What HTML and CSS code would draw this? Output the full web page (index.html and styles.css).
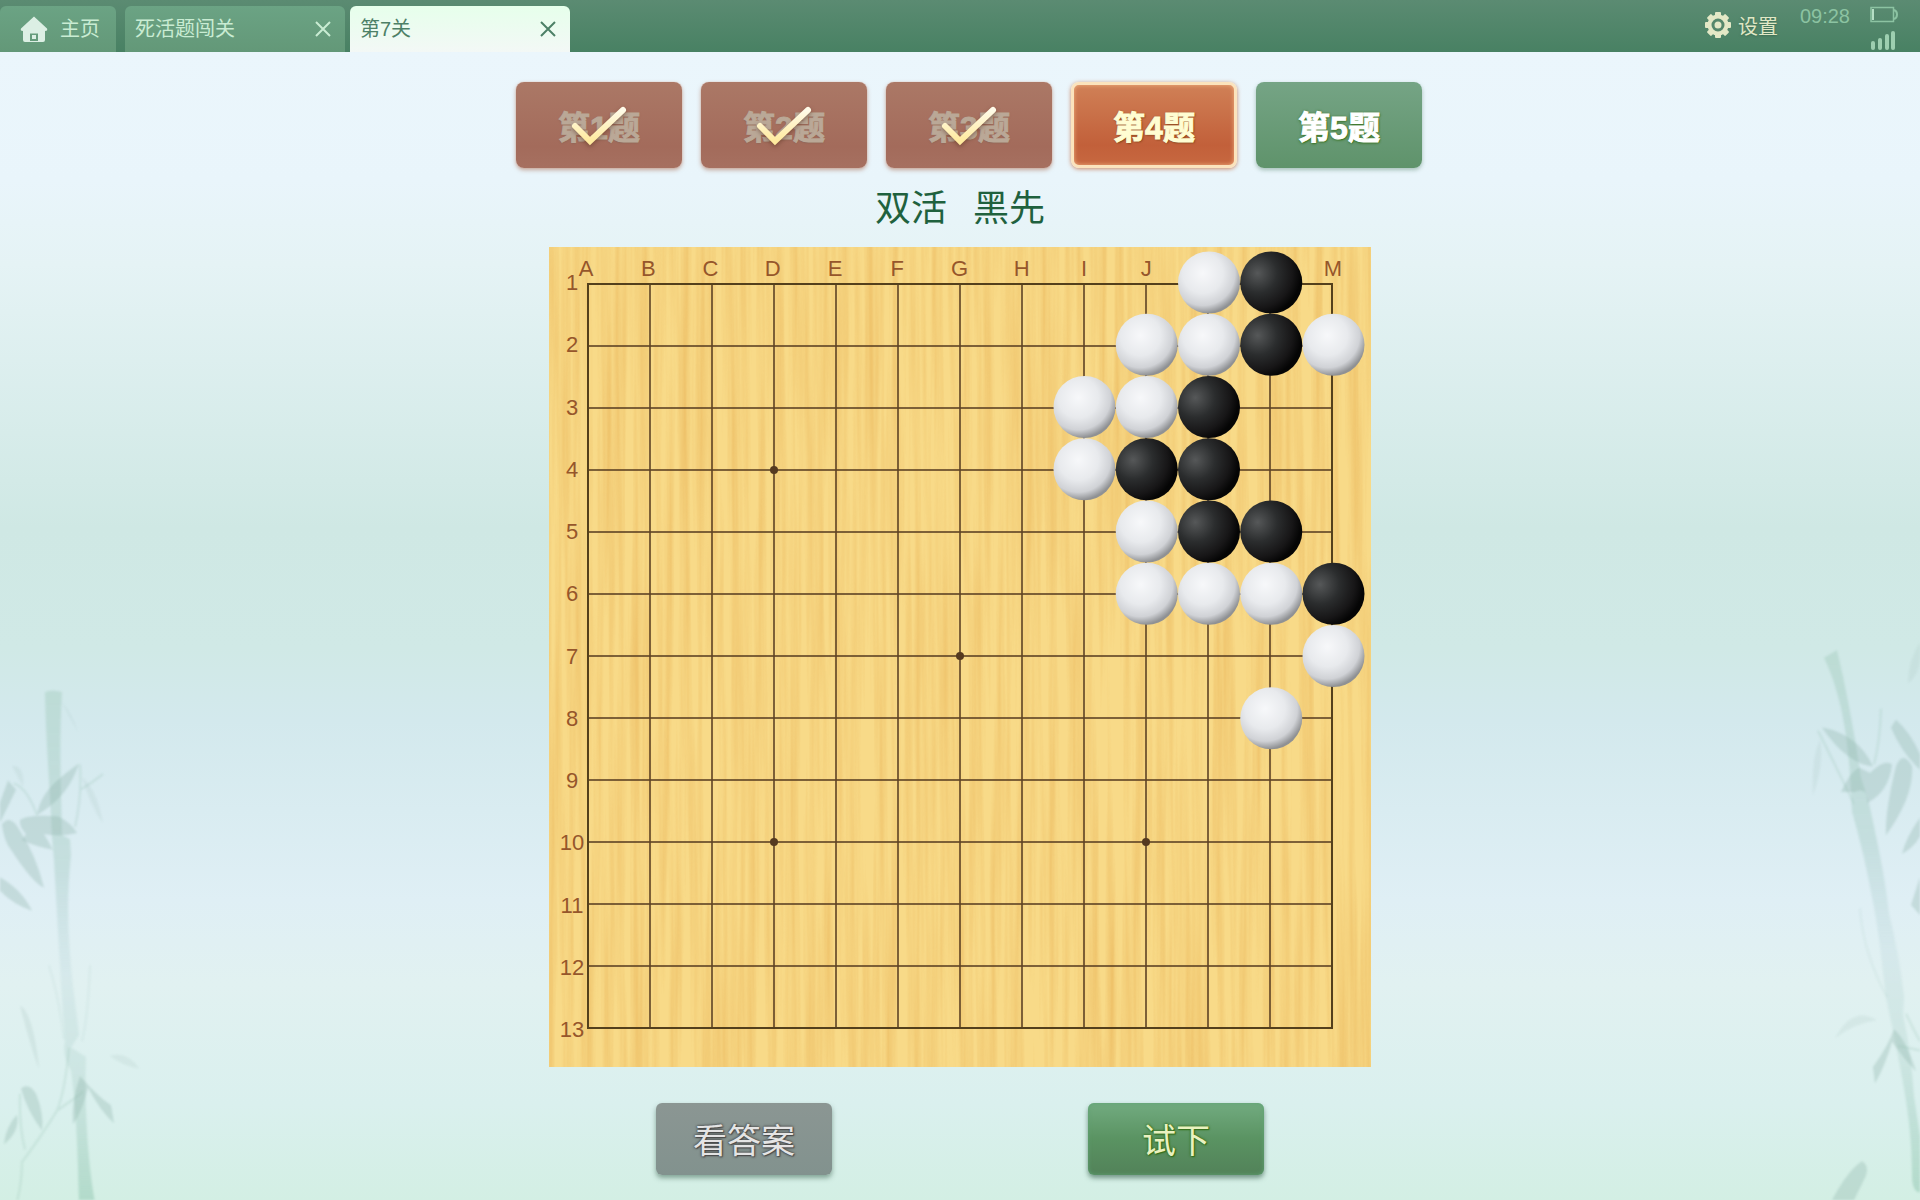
FILE: index.html
```html
<!doctype html>
<html lang="zh-CN">
<head>
    <meta charset="UTF-8">
    <meta name="viewport" content="width=device-width, initial-scale=1.0">
    <title>第7关</title>
    <link rel="stylesheet" href="styles.css">
</head>
<body>
    <header class="topbar">
        <nav class="tabs">
            <a class="tab tab-home" href="#">
                <svg class="icon-home" viewBox="0 0 28 28" aria-hidden="true">
                    <path d="M14 1.5 27 13.5Q28 16 25 16V25Q25 27 23 27H5Q3 27 3 25V16Q0 16 1 13.5ZM10 18.500V26H18V18.500Z" fill="#dcefe4" fill-rule="evenodd"/>
                    <rect x="12" y="20" width="4" height="4" fill="#dcefe4"/>
                </svg>
                <span>主页</span>
            </a>
            <div class="tab">
                <a href="#">死活题闯关</a>
                <button class="tab-close" type="button" aria-label="关闭">
                    <svg viewBox="0 0 16 16"><path d="M1 1 15 15M15 1 1 15"/></svg>
                </button>
            </div>
            <div class="tab active">
                <a href="#">第7关</a>
                <button class="tab-close" type="button" aria-label="关闭">
                    <svg viewBox="0 0 16 16"><path d="M1 1 15 15M15 1 1 15"/></svg>
                </button>
            </div>
        </nav>
        <div class="status">
            <button class="settings" type="button">
                <svg class="icon-gear" viewBox="-14 -14 28 28" aria-hidden="true">
                    <g fill="#e3e8c6">
                        <rect id="tooth" x="-3" y="-13" width="6" height="26" rx="1"/>
                        <use href="#tooth" transform="rotate(45)"/>
                        <use href="#tooth" transform="rotate(90)"/>
                        <use href="#tooth" transform="rotate(135)"/>
                        <circle r="10.500"/>
                    </g>
                    <circle r="5" fill="#e3e8c6" stroke="#55876b" stroke-width="3"/>
                </svg>
                <span>设置</span>
            </button>
            <time class="clock">09:28</time>
            <div class="device">
                <svg viewBox="0 0 28 17" width="28" height="17" aria-hidden="true">
                    <path d="M1 1.500H23.500V15.500H1Z" fill="none" stroke="#8cc3a2" stroke-width="1.500"/>
                    <path d="M24 4Q27 5 27 8.500T24 13" fill="none" stroke="#8cc3a2" stroke-width="2"/>
                    <rect x="2" y="3" width="2" height="11" fill="#b5dfc5"/>
                </svg>
                <svg viewBox="0 0 26 19" width="26" height="19" aria-hidden="true">
                    <g fill="#9dcfb0">
                        <rect x="1" y="10" width="4" height="9" rx="2"/>
                        <rect x="8" y="7" width="4" height="12" rx="2"/>
                        <rect x="15" y="3" width="4" height="16" rx="2"/>
                        <rect x="21" y="0" width="4" height="19" rx="2"/>
                    </g>
                </svg>
            </div>
        </div>
    </header>

    <svg class="bamboo bamboo-left" viewBox="0 0 150 523" preserveAspectRatio="none" aria-hidden="true">
        <defs>
            <linearGradient id="stalk" x1="0" y1="0" x2="0" y2="1">
                <stop offset="0" stop-color="#a9cfc2" stop-opacity=".5"/>
                <stop offset=".35" stop-color="#a9cdc6" stop-opacity=".45"/>
                <stop offset=".55" stop-color="#bcd7dc" stop-opacity=".3"/>
                <stop offset=".75" stop-color="#a9cdc4" stop-opacity=".3"/>
                <stop offset="1" stop-color="#9ccdb9" stop-opacity=".6"/>
            </linearGradient>
        </defs>
        <path d="M45 40Q52 37 62 40C59 90 61 130 62 176L70 180 71 195C66 240 68 275 73 320L79 366 71 378 86 387C84 430 88 490 95 525H79C78 480 76 430 71 400Q62 385 65 372C61 320 57 250 54 200L52 178C50 130 46 90 45 40Z" fill="url(#stalk)"/>
        <g fill="#8db0a8" fill-opacity=".32">
            <path d="M37 157C41 136 54 125 79 108C70 133 56 146 37 157Z"/>
            <path d="M20 162Q26 156 58 158Q72 165 77 174Q60 178 44 175L53 190Q36 187 22 181L26 175Q19 168 20 162Z"/>
            <path d="M2 166Q10 155 20 172Q36 195 44 226Q33 222 11 190Q4 182 2 166Z"/>
            <path d="M0 145L8 124 16 133Q8 149 0 164Z"/>
            <path d="M0 216Q22 228 32 248Q13 242 0 229Z"/>
            <path d="M20 338Q33 345 39 398Q32 382 20 338Z" fill-opacity=".16"/>
            <path d="M21 417Q29 411 36 422 44 441 42 457Q27 438 21 417Z"/>
            <path d="M17 442Q20 458 4 470Q6 453 17 442Z"/>
            <path d="M80 405Q96 423 111 433L114 450Q100 438 88 416Q82 440 73 451Q71 430 80 405Z"/>
            <path d="M82 121Q97 133 103 165Q90 147 82 121ZM12 110Q25 110 23 130ZM110 386Q127 381 139 398Q122 395 110 386ZM62 50Q71 59 78 78Z" fill-opacity=".12"/>
        </g>
        <path d="M80 109Q82 140 75 168M80 133Q91 127 103 118M14 127Q27 131 37 157M69 378Q65 420 57 438Q77 425 83 420M57 438Q43 460 22 487Q22 505 17 525M20 422Q19 453 25 475" fill="none" stroke="#94bfb1" stroke-opacity=".25" stroke-width="2"/>
        <path d="M49 300Q59 330 64 370M90 300Q88 350 82 372" fill="none" stroke="#94bfb1" stroke-opacity=".12" stroke-width="2"/>
    </svg>
    <svg class="bamboo bamboo-right" viewBox="0 0 180 523" preserveAspectRatio="none" aria-hidden="true">
        <path d="M84 34L97 27C107 65 115 105 121 142L129 165C136 195 145 230 149 265Q159 300 164 340L163 356Q171 390 174 430L180 465V516Q172 516 172 500C172 455 164 420 154 375L146 340C141 300 137 270 132 250Q124 210 112 173L110 140C107 95 98 60 84 34Z" fill="url(#stalk)"/>
        <g fill="#8db0a8" fill-opacity=".32">
            <path d="M82 97Q118 103 133 132Q107 130 82 97Z"/>
            <path d="M101 155Q110 137 119 133L130 138Q144 125 152 130Q149 155 127 165Q128 150 115 155Z"/>
            <path d="M156 132Q163 117 172 132Q174 159 146 194Q145 172 156 132Z"/>
            <path d="M151 97L156 90Q170 101 180 121V135Q161 119 151 97Z"/>
            <path d="M180 178Q166 196 162 211Q174 205 180 195ZM180 232L171 257 180 266Z"/>
            <path d="M154 369Q149 383 133 403L135 418Q146 400 152 380Q164 396 176 407Q166 378 154 369Z"/>
            <path d="M92 523Q108 496 122 488 130 492 125 503L114 523Z"/>
            <path d="M95 377Q113 347 137 361Q116 363 95 377ZM80 108Q71 126 73 158Q84 131 80 108ZM180 20Q168 37 168 57Q179 49 180 36Z" fill-opacity=".12"/>
        </g>
        <path d="M78 100Q95 130 114 166M141 80Q140 110 134 130M166 355Q174 370 180 380M158 384L180 388" fill="none" stroke="#94bfb1" stroke-opacity=".25" stroke-width="2"/>
        <path d="M120 260Q123 300 147 340" fill="none" stroke="#94bfb1" stroke-opacity=".12" stroke-width="2"/>
    </svg>

    <main class="content">
        <svg class="defs" width="0" height="0" aria-hidden="true">
            <defs>
                <linearGradient id="checkFill" x1="0" y1="0" x2="0" y2="1">
                    <stop offset="0" stop-color="#fffbe9"/>
                    <stop offset="1" stop-color="#ffea9e"/>
                </linearGradient>
            </defs>
        </svg>
        <div class="questions">
            <button class="question done" type="button">第1题
                <svg class="check" viewBox="0 0 166 86" aria-hidden="true"><path d="M59 44 74 59 107 28"/></svg>
            </button>
            <button class="question done" type="button">第2题
                <svg class="check" viewBox="0 0 166 86" aria-hidden="true"><path d="M59 44 74 59 107 28"/></svg>
            </button>
            <button class="question done" type="button">第3题
                <svg class="check" viewBox="0 0 166 86" aria-hidden="true"><path d="M59 44 74 59 107 28"/></svg>
            </button>
            <button class="question current" type="button">第4题</button>
            <button class="question" type="button">第5题</button>
        </div>

        <h1 class="title"><span>双活</span><span>黑先</span></h1>

        <svg class="board" id="board" viewBox="0 0 822 820" role="img" aria-label="棋盘">
            <defs>
                <filter id="wood" x="0" y="0" width="100%" height="100%" color-interpolation-filters="sRGB">
                    <feTurbulence type="fractalNoise" baseFrequency="0.12 0.003" numOctaves="3" seed="7"/>
                    <feColorMatrix values="0 0 0 0 0.91  0 0 0 0 0.70  0 0 0 0 0.34  1.8 0 0 0 -0.65"/>
                </filter>
                <radialGradient id="white" cx=".4" cy=".35" r=".65">
                    <stop offset="0" stop-color="#f7f8fa"/>
                    <stop offset=".5" stop-color="#e8eaed"/>
                    <stop offset=".8" stop-color="#d0d2d6"/>
                    <stop offset="1" stop-color="#8f9194"/>
                </radialGradient>
                <radialGradient id="black" cx=".28" cy=".35" r=".7">
                    <stop offset="0" stop-color="#565859"/>
                    <stop offset=".45" stop-color="#2b2d2e"/>
                    <stop offset=".8" stop-color="#171617"/>
                    <stop offset="1" stop-color="#050505"/>
                </radialGradient>
            </defs>
            <rect width="822" height="820" fill="#f8da88"/>
            <rect width="822" height="820" filter="url(#wood)" opacity=".6"/>
        </svg>

        <div class="actions">
            <button class="action answer" type="button">看答案</button>
            <button class="action try" type="button">试下</button>
        </div>
    </main>
    <script src="board.js"></script>
</body>
</html>
```
FILE: styles.css
```css
* {
    box-sizing: border-box;
}

body {
    margin: 0;
    min-height: 100vh;
    display: flex;
    flex-direction: column;
    position: relative;
    font-family: "Liberation Sans", "Noto Sans CJK SC", sans-serif;
    background: linear-gradient(#ebf6fc 4%, #e9f5fb 15%, #e5f3f5 22%, #cfe8e4 44%, #d0e9e6 54%, #d3e9ed 60%, #dfeff5 75%, #e1f1f1 82%, #daf0ee 92%, #d3efe4 100%);
}

a {
    color: inherit;
    text-decoration: none;
}

button {
    border: none;
    padding: 0;
    background: none;
    color: inherit;
    font-family: inherit;
    cursor: pointer;
}

/* top bar */
.topbar {
    height: 52px;
    display: flex;
    justify-content: space-between;
    background: linear-gradient(#5b8b72, #488163);
}

.tabs {
    display: flex;
    align-items: flex-end;
    gap: 5px;
}

.tab {
    width: 220px;
    height: 46px;
    padding: 0 14px 0 10px;
    display: flex;
    align-items: center;
    justify-content: space-between;
    border-radius: 6px 6px 0 0;
    background: linear-gradient(#6ba384, #639878);
    color: #c9ecd3;
    font-size: 20px;
    line-height: 26px;
}

.tab-home {
    width: 116px;
    margin-right: 4px;
    padding: 0 16px 0 20px;
}

.tab.active {
    background: linear-gradient(#e6ffeb, #f3f8f6);
    color: #4d8067;
}

.icon-home {
    width: 28px;
    height: 28px;
}

.tab-close {
    width: 16px;
    height: 16px;
    display: flex;
}

.tab-close path {
    fill: none;
    stroke: currentColor;
    stroke-width: 2;
}

.status {
    display: flex;
    padding-right: 22px;
}

.settings {
    display: flex;
    align-items: center;
    gap: 6px;
    height: 50px;
    margin-right: 22px;
    font-size: 20px;
    color: #e0e8c6;
    text-shadow: 0 1px 2px #3d6b50;
}

.icon-gear {
    width: 28px;
    height: 28px;
}

.clock {
    padding-top: 4px;
    margin-right: 20px;
    font-size: 20px;
    line-height: 24px;
    color: #8cc3a2;
}

.device {
    display: flex;
    flex-direction: column;
    gap: 8px;
    padding-top: 6px;
}

/* background plants */
.bamboo {
    position: absolute;
    bottom: 0;
    filter: blur(1px);
}

.bamboo-left {
    left: 0;
    width: 150px;
    height: 550px;
}

.bamboo-right {
    right: 0;
    width: 180px;
    height: 580px;
}

.content {
    position: relative;
    display: flex;
    flex-direction: column;
    align-items: center;
    padding: 30px 0 24px;
}

.defs {
    position: absolute;
}

/* question picker */
.questions {
    display: flex;
    flex-wrap: wrap;
    gap: 19px;
    padding-left: 18px;
}

.question {
    position: relative;
    width: 166px;
    height: 86px;
    border-radius: 8px;
    background: linear-gradient(#75a485, #5f936b);
    box-shadow: 0 2px 4px rgba(60, 110, 80, 0.4);
    color: #fff;
    font-size: 32px;
    font-weight: bold;
    -webkit-text-stroke: 1px;
    text-shadow: 0 0 3px #3d7526, 0 1px 3px #3d7526, 1px 1px 1px #3d7526;
}

.question.done {
    background: linear-gradient(#ab7866, #a36b5b 75%, #a67060);
    box-shadow: 0 0 1px rgba(224, 150, 120, 0.8), 0 2px 4px rgba(160, 90, 60, 0.5);
    color: #baa897;
    text-shadow: 0 1px 2px #8a6455;
}

.question.current {
    border: 3px solid #fbe3bd;
    background: linear-gradient(#d08056, #c2603a 75%, #c76840);
    box-shadow: 0 1px 4px rgba(190, 90, 40, 0.7), inset 0 0 4px #f0b080;
    color: #fffdd2;
    text-shadow: 0 0 2px #8a4a1c, 1px 1px 2px #7a4018;
}

.check {
    position: absolute;
    inset: 0;
    filter: drop-shadow(0 2px 2px rgba(90, 50, 30, 0.5));
}

.check path {
    fill: none;
    stroke: url(#checkFill);
    stroke-width: 6;
    stroke-linecap: round;
}

.title {
    display: flex;
    gap: 26px;
    margin: 19px 0 16px;
    font-size: 36px;
    line-height: 44px;
    font-weight: normal;
    color: #1f613e;
}

/* board */
.board {
    display: block;
    width: 822px;
    max-width: 94vw;
}

.line {
    stroke: #5e4224;
    stroke-opacity: 0.8;
    stroke-width: 2;
}

.frame {
    fill: none;
    stroke: #54401c;
    stroke-width: 2;
}

.star {
    fill: #553a20;
}

.label {
    fill: #96562b;
    font-size: 22px;
    text-anchor: middle;
}

/* bottom buttons */
.actions {
    display: flex;
    gap: 256px;
    margin-top: 36px;
}

.action {
    width: 176px;
    height: 72px;
    padding-bottom: 2px;
    border-radius: 6px;
    font-size: 34px;
    box-shadow: 0 3px 5px rgba(50, 90, 70, 0.5);
}

.answer {
    background: linear-gradient(#8b9693, #82928e);
    color: #e4e4e4;
    text-shadow: 0 0 2px #444, 0 0 3px #444, 1px 1px 1px #555;
}

.try {
    background: linear-gradient(#72ab80, #5a9362 50%, #528259);
    box-shadow: 0 3px 5px rgba(50, 90, 70, 0.6), inset 0 0 4px #5fa274;
    color: #e9f1c0;
    text-shadow: 0 0 2px #37701c, 0 0 3px #37701c, 1px 1px 1px #37701c;
}
```
FILE: board.js
```js
var board = document.getElementById('board');
var size = 13;
var letters = 'ABCDEFGHIJKLM';

var white = ['K1', 'J2', 'K2', 'M2', 'I3', 'J3', 'I4', 'J5', 'J6', 'K6', 'L6', 'M7', 'L8'];
var black = ['L1', 'L2', 'K3', 'J4', 'K4', 'K5', 'L5', 'M6'];
var stars = ['D4', 'J4', 'G7', 'D10', 'J10'];

function add(name, attrs, text) {
    var el = document.createElementNS('http://www.w3.org/2000/svg', name);
    for (var key in attrs) {
        el.setAttribute(key, attrs[key]);
    }
    if (text) el.textContent = text;
    board.appendChild(el);
}

function col(point) { return letters.indexOf(point[0]); }
function row(point) { return parseInt(point.slice(1)) - 1; }

for (var i = 0; i < size; i++) {
    var p = 62 * i;
    add('line', {class: 'line', x1: 39 + p, y1: 37, x2: 39 + p, y2: 781});
    add('line', {class: 'line', x1: 39, y1: 37 + p, x2: 783, y2: 37 + p});
}
add('rect', {class: 'frame', x: 39, y: 37, width: 744, height: 744});

stars.forEach(function (s) {
    add('circle', {class: 'star', cx: 39 + 62 * col(s), cy: 37 + 62 * row(s), r: 4});
});

// K and L are covered by the stones on the first row
for (var n = 0; n < size; n++) {
    if (letters[n] !== 'K' && letters[n] !== 'L') {
        add('text', {class: 'label', x: 37 + 62.25 * n, y: 29}, letters[n]);
    }
    add('text', {class: 'label', x: 23, y: 43 + 62.25 * n}, String(n + 1));
}

function stones(points, fill) {
    points.forEach(function (s) {
        add('circle', {cx: 37.5 + 62.25 * col(s), cy: 35.5 + 62.25 * row(s), r: 31, fill: 'url(#' + fill + ')'});
    });
}
stones(white, 'white');
stones(black, 'black');
```
